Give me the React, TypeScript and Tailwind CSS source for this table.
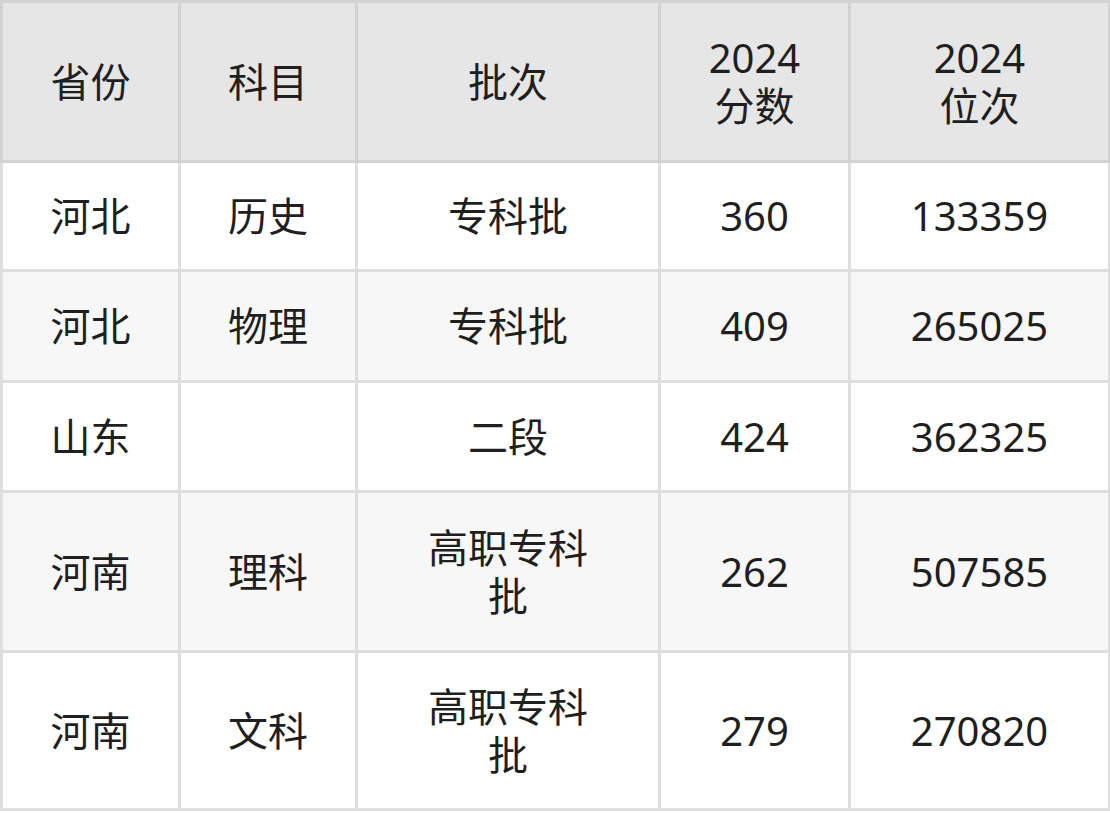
const headers = ['省份', '科目', '批次', '2024\n分数', '2024\n位次'];

const rows: { cells: string[]; h: string; bg: string }[] = [
  { cells: ['河北', '历史', '专科批', '360', '133359'], h: 'h-[109px]', bg: 'bg-white' },
  { cells: ['河北', '物理', '专科批', '409', '265025'], h: 'h-[111px]', bg: 'bg-[#f7f7f7]' },
  { cells: ['山东', '', '二段', '424', '362325'], h: 'h-[110px]', bg: 'bg-white' },
  { cells: ['河南', '理科', '高职专科批', '262', '507585'], h: 'h-[160px]', bg: 'bg-[#f7f7f7]' },
  { cells: ['河南', '文科', '高职专科批', '279', '270820'], h: 'h-[158px]', bg: 'bg-white' },
];

const widths = ['w-[178px]', 'w-[177px]', 'w-[303px]', 'w-[190px]', 'w-[260px]'];

export default function App() {
  return (
    <div
      className="w-[1110px] h-[813px] bg-white overflow-hidden text-[#1f1f1f] text-[40px] leading-[48px]"
      style={{ fontFamily: '"Noto Sans", "Noto Sans CJK SC", sans-serif' }}
    >
      <table className="border-collapse table-fixed w-[1108px]">
        <thead>
          <tr className="h-[160px] bg-[#e6e6e6]">
            {headers.map((t, i) => (
              <th
                key={i}
                className={`${widths[i]} border-[3px] border-[#d3d3d3] font-normal text-center align-middle whitespace-pre-line`}
              >
                {t}
              </th>
            ))}
          </tr>
        </thead>
        <tbody>
          {rows.map((r, ri) => (
            <tr key={ri} className={`${r.h} ${r.bg}`}>
              {r.cells.map((c, ci) => (
                <td key={ci} className="border-[3px] border-[#dedede] text-center align-middle">
                  {ci === 2 ? <span className="inline-block w-[170px]">{c}</span> : c}
                </td>
              ))}
            </tr>
          ))}
        </tbody>
      </table>
    </div>
  );
}
